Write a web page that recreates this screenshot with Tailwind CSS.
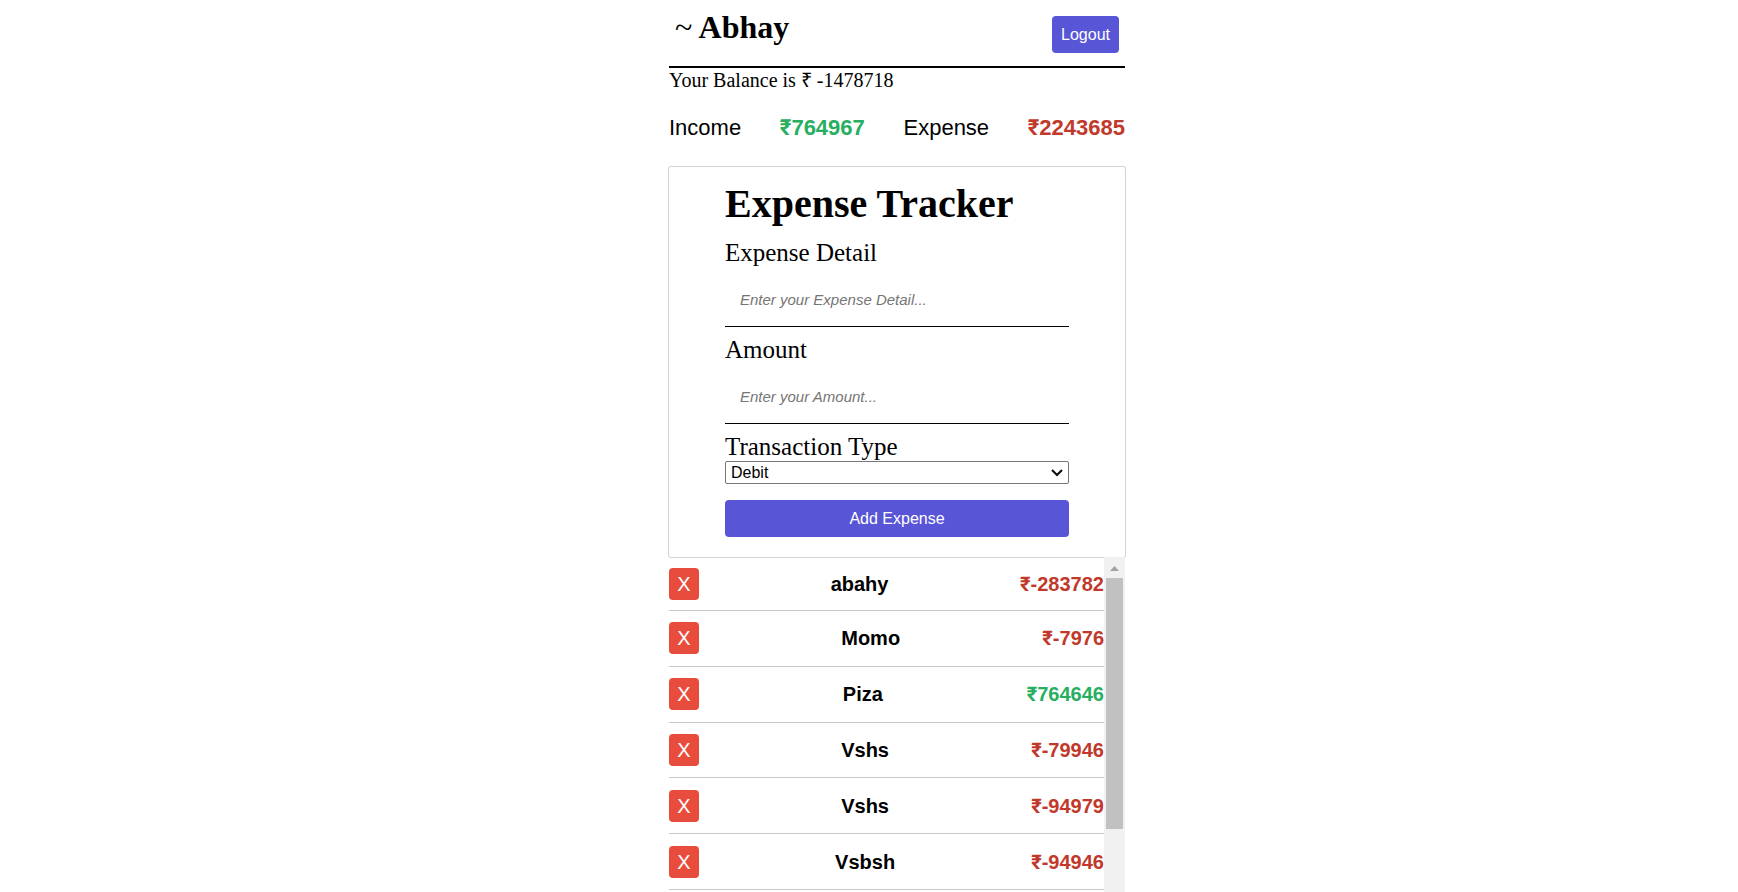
<!DOCTYPE html>
<html lang="en">
<head>
<meta charset="utf-8">
<meta name="viewport" content="width=device-width, initial-scale=1">
<title>Expense Tracker</title>
<script src="https://cdn.jsdelivr.net/npm/@tailwindcss/browser@4"></script>
</head>
<body class="bg-white text-black font-['Liberation_Serif','Times_New_Roman',serif]">
<div class="h-screen overflow-hidden md:pl-14">
<main class="mx-auto flex h-full w-full max-w-[456px] flex-col">
  <header class="flex items-start justify-between border-b-2 border-black px-1.5 pb-[13px] pt-2">
    <h1 class="text-[32px] leading-[38px] font-bold"><span class="font-normal">~</span> Abhay</h1>
    <button type="button" class="mt-2 h-[37px] w-[67px] rounded bg-[#5855d6] font-['Liberation_Sans',Arial,sans-serif] text-base text-white">Logout</button>
  </header>
  <p class="text-[20px] leading-6">Your Balance is ₹ -1478718</p>
  <section class="flex justify-between pt-[23px] pb-[25px] font-['Liberation_Sans',Roboto,sans-serif] text-[22px] leading-[26px]">
    <span>Income</span>
    <strong class="text-[#27ae60]">₹764967</strong>
    <span>Expense</span>
    <strong class="text-[#c0392b]">₹2243685</strong>
  </section>
  <form class="mt-px flex flex-col rounded-xs px-14 pb-5 pt-3 ring-1 ring-[#d3d6d6]">
    <h2 class="text-[40px] leading-[50px] font-bold">Expense Tracker</h2>
    <label for="detail" class="mt-2.5 text-[25px] leading-7">Expense Detail</label>
    <input id="detail" type="text" placeholder="Enter your Expense Detail..." class="h-[60px] border-b border-black px-[15px] pt-[18px] pb-3 font-['Liberation_Sans',Arial,sans-serif] text-[15px] outline-none placeholder:italic placeholder:text-[#757575]">
    <label for="amount" class="mt-[9px] text-[25px] leading-7">Amount</label>
    <input id="amount" type="text" placeholder="Enter your Amount..." class="h-[60px] border-b border-black px-[15px] pt-[18px] pb-3 font-['Liberation_Sans',Arial,sans-serif] text-[15px] outline-none placeholder:italic placeholder:text-[#757575]">
    <label for="type" class="mt-[9px] text-[25px] leading-7">Transaction Type</label>
    <div class="relative">
      <select id="type" class="block h-[23px] w-full appearance-none rounded-xs border border-[#767676] bg-white px-[5px] font-['Liberation_Sans',Arial,sans-serif] text-base leading-5">
        <option>Debit</option>
        <option>Credit</option>
      </select>
      <svg class="pointer-events-none absolute top-2 right-1.5 h-2 w-3" viewBox="0 0 12 8" fill="none" stroke="#101010" stroke-width="2.2"><path d="M1 1l5 5l5-5"/></svg>
    </div>
    <button type="submit" class="mt-4 h-[37px] rounded bg-[#5855d6] font-['Liberation_Sans',Arial,sans-serif] text-base text-white">Add Expense</button>
  </form>
  <section class="flex min-h-0 flex-1 font-['Liberation_Sans',Roboto,sans-serif] text-xl">
    <ul class="grid flex-1 grid-rows-[54px_repeat(5,1fr)] pb-0.5">
      <li class="flex items-center justify-between border-b border-[#c8c8c8] font-bold"><button type="button" aria-label="Delete abahy" class="h-8 w-[30px] rounded bg-[#e74c3c] font-normal text-white">X</button><span>abahy</span><span class="text-[#c0392b]">₹-283782</span></li>
      <li class="flex items-center justify-between border-b border-[#c8c8c8] font-bold"><button type="button" aria-label="Delete Momo" class="h-8 w-[30px] rounded bg-[#e74c3c] font-normal text-white">X</button><span>Momo</span><span class="text-[#c0392b]">₹-7976</span></li>
      <li class="flex items-center justify-between border-b border-[#c8c8c8] font-bold"><button type="button" aria-label="Delete Piza" class="h-8 w-[30px] rounded bg-[#e74c3c] font-normal text-white">X</button><span>Piza</span><span class="text-[#27ae60]">₹764646</span></li>
      <li class="flex items-center justify-between border-b border-[#c8c8c8] font-bold"><button type="button" aria-label="Delete Vshs" class="h-8 w-[30px] rounded bg-[#e74c3c] font-normal text-white">X</button><span>Vshs</span><span class="text-[#c0392b]">₹-79946</span></li>
      <li class="flex items-center justify-between border-b border-[#c8c8c8] font-bold"><button type="button" aria-label="Delete Vshs" class="h-8 w-[30px] rounded bg-[#e74c3c] font-normal text-white">X</button><span>Vshs</span><span class="text-[#c0392b]">₹-94979</span></li>
      <li class="flex items-center justify-between border-b border-[#c8c8c8] font-bold"><button type="button" aria-label="Delete Vsbsh" class="h-8 w-[30px] rounded bg-[#e74c3c] font-normal text-white">X</button><span>Vsbsh</span><span class="text-[#c0392b]">₹-94946</span></li>
    </ul>
    <div class="flex w-[21px] flex-col bg-[#f1f1f1] px-0.5" aria-hidden="true">
      <svg class="h-[21px] w-full shrink-0" viewBox="0 0 17 21"><path d="M4 14l4.500-5l4.500 5z" fill="#a3a3a3"/></svg>
      <div class="h-3/4 bg-[#c1c1c1]"></div>
    </div>
  </section>
</main>
</div>
</body>
</html>
